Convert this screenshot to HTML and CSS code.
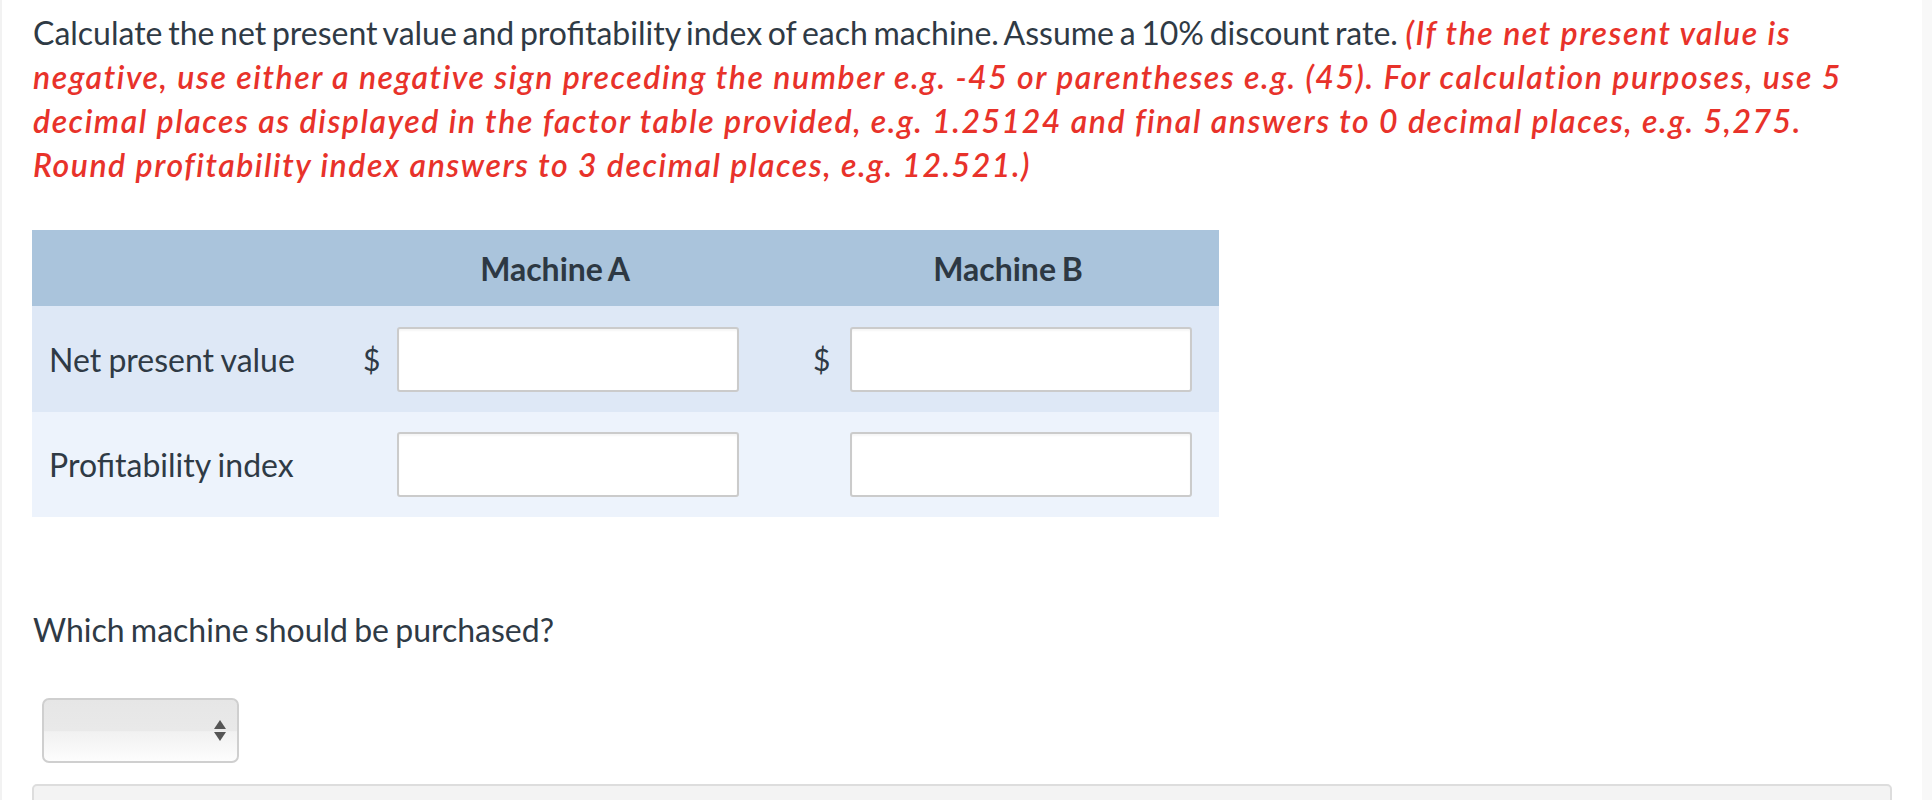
FILE: index.html
```html
<!DOCTYPE html>
<html lang="en">
<head>
<meta charset="utf-8">
<title>Net present value</title>
<link rel="stylesheet" href="styles.css">
</head>
<body>
<div class="page">
  <p class="question">Calculate the net present value and profitability index of each machine. Assume a 10% discount rate. <em class="hint">(If the net present value is negative, use either a negative sign preceding the number e.g. -45 or parentheses e.g. (45). For calculation purposes, use 5 decimal places as displayed in the factor table provided, e.g. 1.25124 and final answers to 0 decimal places, e.g. 5,275. Round profitability index answers to 3 decimal places, e.g. 12.521.)</em></p>

  <div class="table">
    <div class="row head">
      <div class="cell"></div>
      <div class="cell th th-a">Machine A</div>
      <div class="cell th th-b">Machine B</div>
    </div>
    <div class="row r1">
      <div class="cell label">Net present value</div>
      <div class="cell val val-a"><span class="cur">$</span><input class="box" type="text"></div>
      <div class="cell val val-b"><span class="cur">$</span><input class="box" type="text"></div>
    </div>
    <div class="row r2">
      <div class="cell label">Profitability index</div>
      <div class="cell val val-a"><span class="cur"></span><input class="box" type="text"></div>
      <div class="cell val val-b"><span class="cur"></span><input class="box" type="text"></div>
    </div>
  </div>

  <p class="q2">Which machine should be purchased?</p>

  <div class="select">
    <span class="arrows"><span class="up"></span><span class="down"></span></span>
  </div>

  <div class="panel"></div>
</div>
</body>
</html>
```

FILE: styles.css
```css
html {
  background: #f8f8f8;
}
body {
  margin: 0;
  font-family: Lato, "Open Sans", sans-serif;
  color: #2f3a45;
  overflow: hidden;
  height: 800px;
}
.page {
  background: #ffffff;
  margin-right: 10px;
  border-left: 2px solid #f2f2f2;
  padding: 11px 50px 0 31px;
  height: 800px;
  box-sizing: border-box;
  overflow: hidden;
}
.question {
  margin: 0;
  font-size: 32px;
  line-height: 44px;
  word-spacing: -2.5px;
}
.hint {
  color: #e8322a;
  font-weight: 600;
  font-style: italic;
  word-spacing: 0;
  letter-spacing: 1.55px;
  margin-left: 2px;
}
.table {
  margin-top: 43px;
  margin-left: -1px;
  width: 1187px;
}
.row {
  display: grid;
  grid-template-columns: 311px 447px 429px;
}
.head {
  background: #aac4dc;
  height: 76px;
  align-items: center;
}
.th {
  font-size: 32px;
  font-weight: 700;
  color: #2d3843;
  text-align: center;
  word-spacing: -2px;
}
.th-a {
  padding-right: 23px;
}
.th-b {
  padding-left: 7px;
}
.r1 {
  background: #dee8f6;
  height: 106px;
  align-items: center;
}
.r2 {
  background: #edf3fc;
  height: 105px;
  align-items: center;
}
.label {
  padding-left: 17px;
  font-size: 32px;
  word-spacing: -1px;
}
.val {
  display: flex;
  align-items: center;
}
.val-a {
  padding-left: 20px;
}
.val-b {
  padding-left: 23px;
}
.cur {
  width: 34px;
  font-size: 30px;
  flex: none;
}
.val-b .cur {
  width: 37px;
}
.box {
  width: 342px;
  height: 65px;
  box-sizing: border-box;
  border: 2px solid #cbcbcb;
  border-radius: 3px;
  background: #ffffff;
  box-shadow: inset 0 2px 2px rgba(0, 0, 0, 0.04);
  margin: 0;
  padding: 0;
}
.q2 {
  margin: 91px 0 0;
  font-size: 32px;
  line-height: 44px;
  word-spacing: -2px;
}
.select {
  margin: 46px 0 0 9px;
  width: 197px;
  height: 65px;
  box-sizing: border-box;
  border: 2px solid #cfcfcf;
  border-radius: 7px;
  background: linear-gradient(#e6e6e6 0%, #e9e9e9 50%, #f1f1f1 52%, #fdfdfd 100%);
  display: flex;
  align-items: center;
  justify-content: flex-end;
  padding-right: 11px;
}
.arrows {
  display: flex;
  flex-direction: column;
  gap: 3px;
}
.up {
  width: 0;
  height: 0;
  border-left: 6px solid transparent;
  border-right: 6px solid transparent;
  border-bottom: 9px solid #555555;
}
.down {
  width: 0;
  height: 0;
  border-left: 6px solid transparent;
  border-right: 6px solid transparent;
  border-top: 9px solid #555555;
}
.panel {
  margin: 21px 0 0 -1px;
  width: 1860px;
  height: 60px;
  box-sizing: border-box;
  background: #f3f3f3;
  border: 2px solid #dddddd;
  border-radius: 5px;
}
```
